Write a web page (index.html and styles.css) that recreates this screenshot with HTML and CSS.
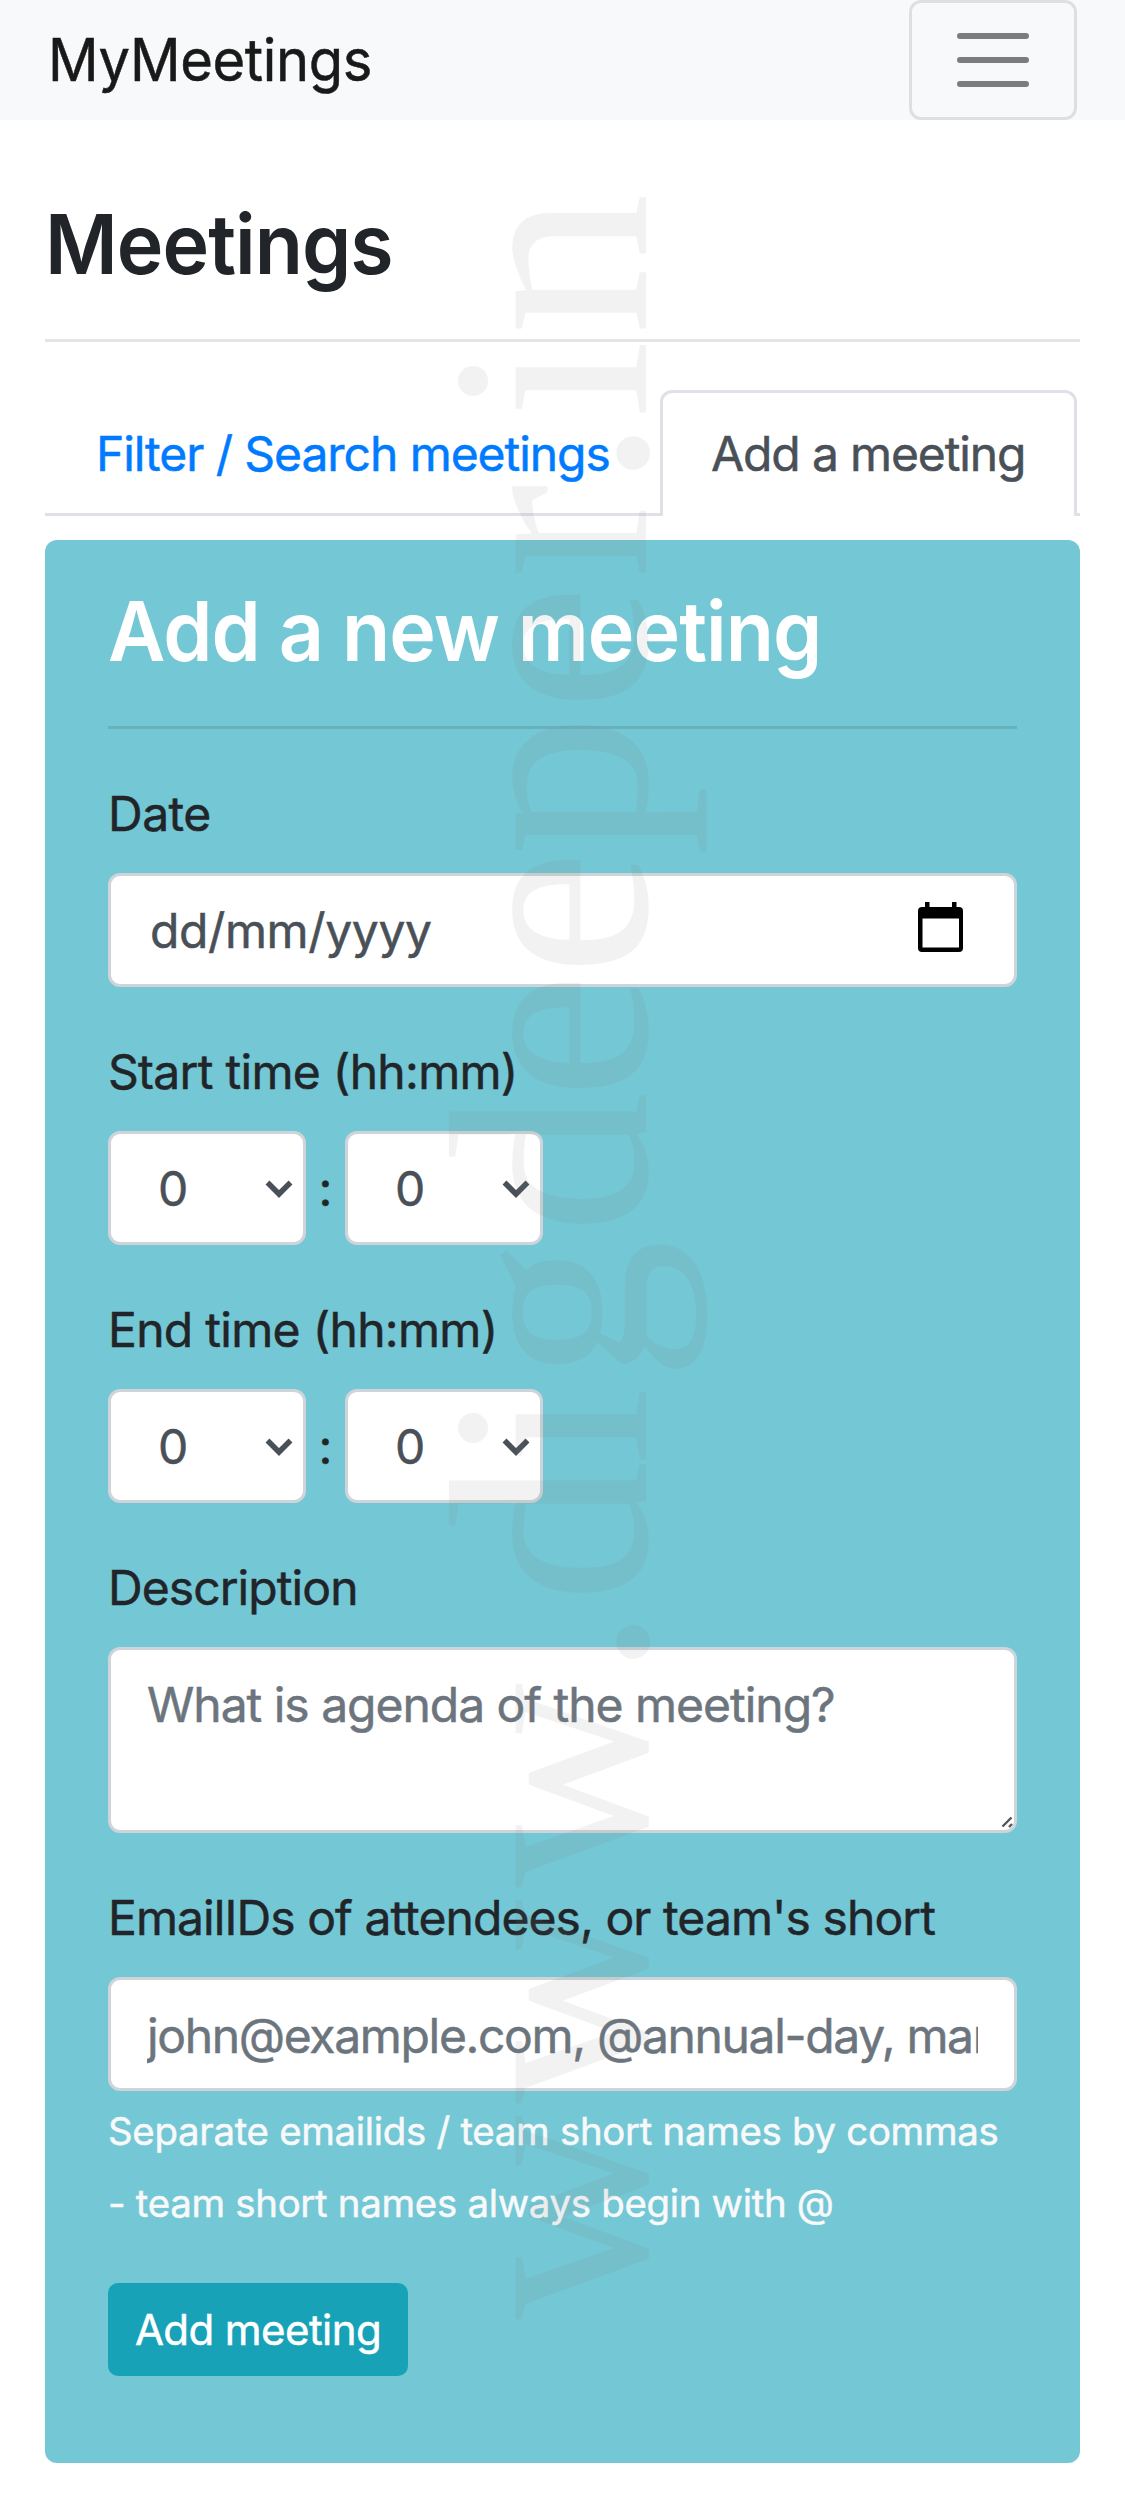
FILE: index.html
```
<!DOCTYPE html>
<html lang="en">
<head>
<meta charset="utf-8">
<title>MyMeetings</title>
<link rel="stylesheet" href="styles.css">
</head>
<body>
<nav class="navbar">
  <a class="brand">MyMeetings</a>
  <button class="toggler" type="button" aria-label="Menu">
    <svg class="toggler-icon" viewBox="0 0 30 30"><path d="M4 7h22M4 15h22M4 23h22" stroke="rgba(0,0,0,.5)" stroke-width="2" stroke-linecap="round"/></svg>
  </button>
</nav>
<main class="container">
  <h1 class="page-title">Meetings</h1>
  <hr class="rule">
  <div class="tabs">
    <a class="tab tab-link">Filter / Search meetings</a>
    <a class="tab tab-active">Add a meeting</a>
  </div>
  <form class="card">
    <h2 class="card-title">Add a new meeting</h2>
    <hr class="rule">
    <div class="group">
      <label class="label label-wide">Date</label>
      <div class="control date">
        <span class="date-text">dd/mm/yyyy</span>
        <svg class="calendar" viewBox="0 0 45 50"><path fill-rule="evenodd" d="M7 0h4.500v5H34V0h4.500v5H41q4 0 4 4v37q0 4-4 4H4q-4 0-4-4V9q0-4 4-4h3zM4.500 16.500V45.500h36.500V16.500z"/></svg>
      </div>
    </div>
    <div class="group">
      <label class="label label-time">Start time (hh:mm)</label>
      <div class="time">
        <div class="control select">0<svg class="chevron" viewBox="0 0 28 18"><path d="M2.500 2.500L14 14L25.500 2.500" fill="none" stroke="#495057" stroke-width="5.500"/></svg></div>
        <span class="colon">:</span>
        <div class="control select">0<svg class="chevron" viewBox="0 0 28 18"><path d="M2.500 2.500L14 14L25.500 2.500" fill="none" stroke="#495057" stroke-width="5.500"/></svg></div>
      </div>
    </div>
    <div class="group">
      <label class="label label-time">End time (hh:mm)</label>
      <div class="time">
        <div class="control select">0<svg class="chevron" viewBox="0 0 28 18"><path d="M2.500 2.500L14 14L25.500 2.500" fill="none" stroke="#495057" stroke-width="5.500"/></svg></div>
        <span class="colon">:</span>
        <div class="control select">0<svg class="chevron" viewBox="0 0 28 18"><path d="M2.500 2.500L14 14L25.500 2.500" fill="none" stroke="#495057" stroke-width="5.500"/></svg></div>
      </div>
    </div>
    <div class="group">
      <label class="label" for="agenda">Description</label>
      <div class="area">
        <textarea class="control textarea" id="agenda" placeholder="What is agenda of the meeting?"></textarea>
        <svg class="grip" viewBox="0 0 12 12"><path d="M1.500 10.500L10.500 1.500M8 11L11 8" stroke="#555" stroke-width="2.400"/></svg>
      </div>
    </div>
    <div class="group group-email">
      <label class="label" for="emails">EmailIDs of attendees, or team's short</label>
      <input class="control input" id="emails" type="text" placeholder="john@example.com, @annual-day, marketing">
      <small class="hint">Separate emailids / team short names by commas<br>- team short names always begin with @</small>
    </div>
    <button class="submit" type="button">Add meeting</button>
  </form>
</main>
<svg class="watermark" viewBox="0 0 1125 2511" aria-hidden="true">
  <text transform="translate(646 2322) rotate(-90)" x="105 321 537 680 790 896 1012 1159 1286 1409 1537 1674 1791 1869 1943 2058">www.digdeeper.in</text>
</svg>
</body>
</html>
```
FILE: styles.css
```
* { box-sizing: border-box; }

body {
  position: relative;
  margin: 0;
  height: 2511px;
  overflow: hidden;
  background: #fff;
  color: #212529;
  font-family: Inter, "Liberation Sans", sans-serif;
  font-size: 48px;
  line-height: 72px;
  -webkit-text-stroke: .5px;
}

.navbar {
  display: flex;
  align-items: center;
  justify-content: space-between;
  height: 120px;
  padding: 0 48px;
  background: #f8f9fa;
}

.brand {
  color: #191919;
  font-size: 59px;
  line-height: 118px;
  letter-spacing: -.4px;
  transform: scaleX(.95);
  transform-origin: left;
}

.toggler {
  display: flex;
  align-items: center;
  justify-content: center;
  width: 168px;
  height: 120px;
  padding: 0;
  border: 3px solid rgba(0, 0, 0, .1);
  border-radius: 12px;
  background: transparent;
}

.toggler-icon { width: 90px; height: 90px; }

.container { padding: 74px 45px 48px; }

.page-title,
.card-title {
  margin: 0 0 44px;
  font-size: 83px;
  font-weight: 600;
  line-height: 101px;
  letter-spacing: -1px;
  transform: scaleX(.95);
  transform-origin: left;
  -webkit-text-stroke: 0;
}

.rule {
  height: 3px;
  margin: 0 0 48px;
  border: 0;
  background: rgba(0, 0, 0, .1);
}

.tabs {
  display: flex;
  height: 126px;
  margin-bottom: 24px;
  box-shadow: inset 0 -3px #dee2e6;
}

.tab {
  padding: 25px 48px 0;
  border: 3px solid transparent;
  border-bottom: 0;
  border-radius: 12px 12px 0 0;
  white-space: nowrap;
}

.tab-link {
  width: 615px;
  color: #007bff;
  letter-spacing: -1.06px;
}

.tab-active {
  width: 417px;
  border-color: #dee2e6;
  background: #fff;
  color: #495057;
  letter-spacing: -1.13px;
}

.card {
  height: 1923px;
  padding: 41px 63px 0;
  border-radius: 12px;
  background: #74c7d4;
}

.card-title { color: #fff; }

.group { margin-bottom: 48px; }

.label {
  display: block;
  margin-bottom: 24px;
  padding-top: 2px;
  line-height: 70px;
  white-space: nowrap;
  letter-spacing: -.92px;
}

.label-wide { letter-spacing: -.5px; }
.label-time { letter-spacing: -.7px; }

.control {
  display: block;
  width: 100%;
  height: 114px;
  padding: 19px 36px 17px;
  border: 3px solid #ced4da;
  border-radius: 12px;
  background: #fff;
  color: #495057;
  font: inherit;
}

.control::placeholder { color: #6c757d; opacity: 1; }

.date {
  display: flex;
  justify-content: space-between;
  padding-right: 51px;
}

.date-text { padding-left: 3px; letter-spacing: -.38px; }

.calendar { width: 45px; height: 50px; margin-top: 7px; }

.time { display: flex; }

.select {
  display: flex;
  align-items: center;
  justify-content: space-between;
  width: 198px;
  padding-right: 10px;
  padding-left: 47px;
}

.chevron { width: 28px; height: 18px; }

.colon {
  width: 39px;
  height: 114px;
  line-height: 116px;
  text-align: center;
}

.area { position: relative; }

.textarea {
  height: 186px;
  resize: none;
  letter-spacing: -1.02px;
}

.grip {
  position: absolute;
  right: 4px;
  bottom: 5px;
  width: 12px;
  height: 12px;
}

.input { letter-spacing: -1.34px; }

.group-email { margin-bottom: 44px; }

.hint {
  display: block;
  margin-top: 4px;
  color: #f8f9fa;
  font-size: 38.4px;
  white-space: nowrap;
  letter-spacing: -.3px;
}

.submit {
  display: block;
  width: 300px;
  height: 93px;
  padding: 1px 0 0;
  border: 0;
  border-radius: 10px;
  background: #17a2b8;
  color: #fff;
  font: 42px/92px Inter, "Liberation Sans", sans-serif;
  letter-spacing: -.57px;
}

.watermark {
  position: absolute;
  top: 0;
  left: 0;
  width: 1125px;
  height: 2511px;
  pointer-events: none;
  font-family: "Liberation Serif", serif;
  font-size: 284px;
  text-anchor: middle;
  fill: rgba(128, 128, 128, .1);
  -webkit-text-stroke: 0;
}
```
